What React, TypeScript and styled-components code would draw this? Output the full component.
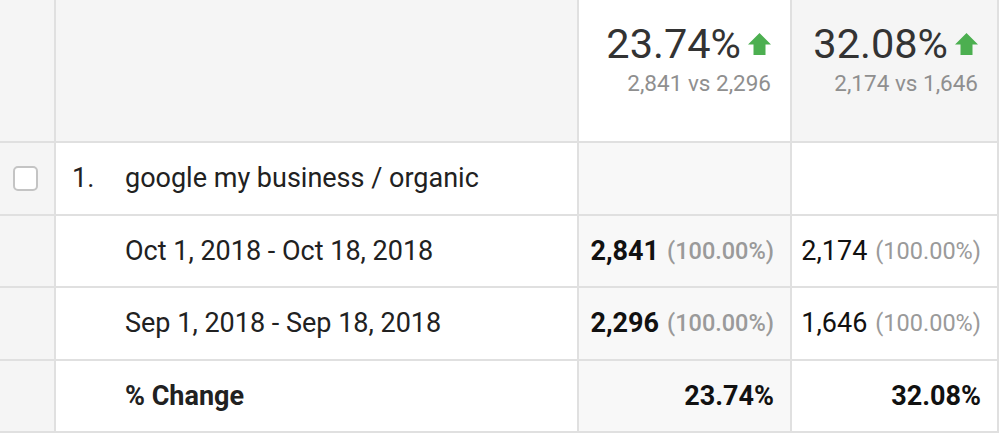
import { Fragment } from "react";
import styled, { createGlobalStyle } from "styled-components";

const GlobalStyle = createGlobalStyle`
  html, body {
    margin: 0;
    padding: 0;
    background: #ffffff;
  }
  body {
    font-family: Roboto, "Liberation Sans", Arial, sans-serif;
    color: #212121;
  }
`;

const Grid = styled.div`
  display: grid;
  grid-template-columns: 56px 523px 213px 207px;
  grid-template-rows: 143px repeat(4, 72.5px);
  width: 1000px;
`;

const Cell = styled.div<{ $bg?: string; $right?: boolean }>`
  box-sizing: border-box;
  display: flex;
  align-items: center;
  justify-content: ${(p) => (p.$right ? "flex-end" : "flex-start")};
  background: ${(p) => p.$bg || "#ffffff"};
  border-right: 2px solid #e0e0e0;
  border-bottom: 2px solid #e0e0e0;
  padding: 0 16px 0 0;
  font-size: 27px;
  white-space: nowrap;
`;

const HeaderCell = styled(Cell)`
  align-items: flex-start;
  padding-top: 23px;
  padding-right: 19px;
`;

const CheckCell = styled(Cell)`
  justify-content: center;
  padding: 0;
  background: #f5f5f5;
`;

const Checkbox = styled.span`
  box-sizing: border-box;
  width: 25px;
  height: 25px;
  border: 2px solid #c4c4c4;
  border-radius: 5px;
  background: #ffffff;
  margin-left: -4px;
`;

const Label = styled.div<{ $bold?: boolean }>`
  display: flex;
  padding-left: 16px;
  font-weight: ${(p) => (p.$bold ? 700 : 400)};
  color: #212121;
`;

const RankNum = styled.span`
  width: 53px;
`;

const Indent = styled.span`
  padding-left: 53px;
`;

const Metric = styled.div`
  display: flex;
  flex-direction: column;
  align-items: flex-end;
`;

const MetricTop = styled.div`
  display: flex;
  align-items: center;
`;

const BigValue = styled.span`
  font-size: 41.5px;
  line-height: 1;
  color: #333333;
`;

const UpArrow = styled.svg`
  width: 23px;
  height: 22px;
  margin-left: 7px;
  fill: #4caf50;
`;

const Compare = styled.span`
  margin-top: 7px;
  font-size: 22.5px;
  line-height: 1;
  color: #8f8f8f;
`;

const Num = styled.span<{ $bold?: boolean }>`
  font-weight: ${(p) => (p.$bold ? 700 : 400)};
  color: #111111;
`;

const Share = styled.span<{ $bold?: boolean }>`
  margin-left: 8px;
  font-size: 23.5px;
  font-weight: ${(p) => (p.$bold ? 500 : 400)};
  color: #9a9a9a;
`;

function Arrow() {
  return (
    <UpArrow viewBox="0 0 23 22">
      <polygon points="11.5,0 23,11.5 17.5,11.5 17.5,22 5.5,22 5.5,11.5 0,11.5" />
    </UpArrow>
  );
}

const metrics = [
  { change: "23.74%", cur: "2,841", prev: "2,296", bold: true },
  { change: "32.08%", cur: "2,174", prev: "1,646", bold: false },
];

const ranges = [
  { label: "Oct 1, 2018 - Oct 18, 2018", key: "cur" as const },
  { label: "Sep 1, 2018 - Sep 18, 2018", key: "prev" as const },
];

export default function App() {
  return (
    <>
      <GlobalStyle />
      <Grid>
        <HeaderCell $bg="#f5f5f5" />
        <HeaderCell $bg="#f5f5f5" />
        {metrics.map((m, i) => (
          <HeaderCell key={m.change} $right $bg={i === 0 ? "#ffffff" : "#f5f5f5"}>
            <Metric>
              <MetricTop>
                <BigValue>{m.change}</BigValue>
                <Arrow />
              </MetricTop>
              <Compare>
                {m.cur} vs {m.prev}
              </Compare>
            </Metric>
          </HeaderCell>
        ))}

        <CheckCell>
          <Checkbox />
        </CheckCell>
        <Cell>
          <Label>
            <RankNum>1.</RankNum>
            google my business / organic
          </Label>
        </Cell>
        <Cell $bg="#f8f8f8" />
        <Cell />

        {ranges.map((r) => (
          <Fragment key={r.label}>
            <CheckCell />
            <Cell>
              <Label>
                <Indent>{r.label}</Indent>
              </Label>
            </Cell>
            {metrics.map((m, i) => (
              <Cell key={m.change} $right $bg={i === 0 ? "#f8f8f8" : "#ffffff"}>
                <Num $bold={m.bold}>{m[r.key]}</Num>
                <Share $bold={m.bold}>(100.00%)</Share>
              </Cell>
            ))}
          </Fragment>
        ))}

        <CheckCell />
        <Cell>
          <Label $bold>
            <Indent>% Change</Indent>
          </Label>
        </Cell>
        {metrics.map((m, i) => (
          <Cell key={"chg" + m.change} $right $bg={i === 0 ? "#f8f8f8" : "#ffffff"}>
            <Num $bold>{m.change}</Num>
          </Cell>
        ))}
      </Grid>
    </>
  );
}
